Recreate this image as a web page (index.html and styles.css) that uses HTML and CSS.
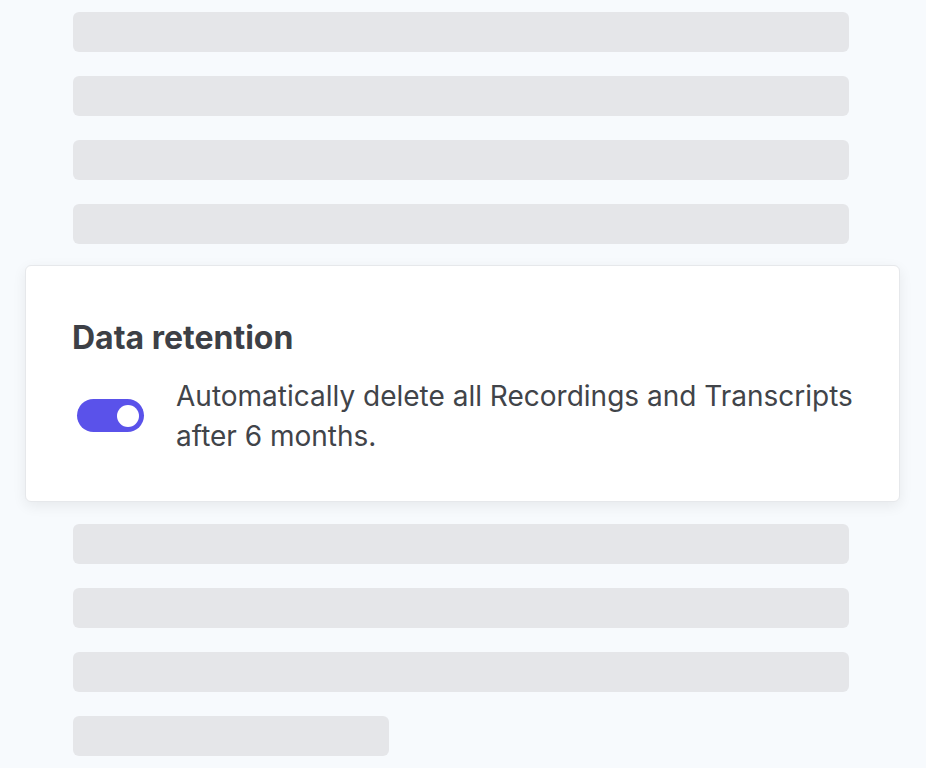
FILE: index.html
```html
<!DOCTYPE html>
<html lang="en">
<head>
    <meta charset="UTF-8">
    <meta name="viewport" content="width=device-width, initial-scale=1.0">
    <title>Data retention</title>
    <link rel="stylesheet" href="styles.css">
</head>
<body>
    <main class="settings">
        <div class="placeholder"></div>
        <div class="placeholder"></div>
        <div class="placeholder"></div>
        <div class="placeholder"></div>

        <section class="card">
            <h2>Data retention</h2>
            <div class="option">
                <span class="toggle on"><span class="knob"></span></span>
                <p>Automatically delete all Recordings and Transcripts after 6 months.</p>
            </div>
        </section>

        <div class="placeholder"></div>
        <div class="placeholder"></div>
        <div class="placeholder"></div>
        <div class="placeholder short"></div>
    </main>
</body>
</html>
```

FILE: styles.css
```css
body {
    margin: 0;
    padding: 0;
    background-color: #f7fafd;
    font-family: Inter, "Noto Sans", sans-serif;
    overflow: hidden;
}
.settings {
    width: 776px;
    padding: 12px 0 0 73px;
    display: flex;
    flex-direction: column;
    gap: 24px;
}
.placeholder {
    height: 40px;
    background-color: #e5e6e9;
    border-radius: 6px;
}
.placeholder.short {
    width: 316px;
}
.card {
    width: 787px;
    margin: -3px 0 -2px -48px;
    padding: 52px 40px 45px 46px;
    background-color: white;
    border: 1px solid #e6e8eb;
    border-radius: 6px;
    box-shadow: 0 4px 14px rgba(0, 0, 0, 0.07);
}
.card h2 {
    margin: 0 0 18px;
    font-size: 32px;
    line-height: 40px;
    font-weight: 700;
    color: #3d4046;
}
.option {
    display: flex;
    align-items: flex-start;
    gap: 32px;
}
.option p {
    margin: 0;
    font-size: 28px;
    line-height: 40px;
    color: #414449;
}
.toggle {
    flex: none;
    width: 67px;
    height: 33px;
    margin: 23px 0 0 5px;
    border-radius: 17px;
    background-color: #5a52ea;
    display: flex;
    align-items: center;
    justify-content: flex-end;
    padding: 0 5px;
    box-sizing: border-box;
}
.knob {
    width: 22px;
    height: 22px;
    border-radius: 50%;
    background-color: white;
}
```
